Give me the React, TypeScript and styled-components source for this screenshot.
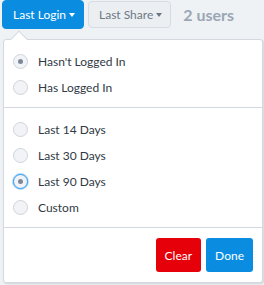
import * as React from "react";
import styled, { createGlobalStyle } from "styled-components";

const Global = createGlobalStyle`
    body{
        margin: 0;
        background: #eef2f5;
        font-family: Lato, "Noto Sans", sans-serif;
    }
`;

const Page = styled.div`
    position: relative;
    width: 264px;
    height: 285px;
    overflow: hidden;
`;

const Toolbar = styled.div`
    display: flex;
    align-items: center;
    gap: 4px;
    padding: 0 0 0 2px;
    height: 29px;
`;

const FilterButton = styled.button<{active?:boolean}>`
    height: ${props=>props.active ? "29px" : "27px"};
    padding: 0 8px 0 10px;
    border-radius: 4px;
    border: 1px solid ${props=>props.active ? "#0a8de0" : "#d6dce2"};
    background: ${props=>props.active ? "#0a8de0" : "#eceff2"};
    color: ${props=>props.active ? "#ffffff" : "#6c7886"};
    font-family: Lato, sans-serif;
    font-size: 12px;
    display: flex;
    align-items: center;
    gap: 3px;
`;

const Caret = styled.span`
    width: 0;
    height: 0;
    border-left: 3.5px solid transparent;
    border-right: 3.5px solid transparent;
    border-top: 4px solid currentColor;
`;

const Count = styled.span`
    margin-left: 8px;
    font-size: 16px;
    font-weight: 700;
    color: #9ba6b4;
`;

const Popup = styled.div`
    position: absolute;
    left: 3px;
    top: 39px;
    width: 258px;
    background: #fff;
    border: 1px solid #d3d9df;
    border-radius: 3px;
    box-shadow: 1px 1px 2px rgba(0,0,0,0.12);
    &::before{
        content: "";
        position: absolute;
        left: 9px;
        top: -7px;
        width: 11px;
        height: 11px;
        background: #fff;
        border-left: 1px solid #d3d9df;
        border-top: 1px solid #d3d9df;
        transform: rotate(45deg);
    }
`;

const Section = styled.div`
    display: flex;
    flex-direction: column;
    padding: 8px 0 7px 9px;
    border-bottom: 1px solid #d3d9df;
`;

const Row = styled.label`
    display: flex;
    align-items: center;
    gap: 10px;
    height: 26px;
    font-size: 12px;
    color: #323a45;
`;

const Radio = styled.span<{checked?:boolean;focus?:boolean}>`
    box-sizing: border-box;
    width: 15px;
    height: 15px;
    border-radius: 50%;
    background: #f1f3f6;
    border: 1px solid ${props=>props.focus ? "#2a9af0" : "#cfd5dc"};
    box-shadow: ${props=>props.focus ? "0 0 0 1px rgba(42,154,240,0.35)" : "none"};
    display: flex;
    align-items: center;
    justify-content: center;
    &::after{
        content: "";
        display: ${props=>props.checked ? "block" : "none"};
        width: 5px;
        height: 5px;
        border-radius: 50%;
        background: #7d8898;
    }
`;

const Footer = styled.div`
    display: flex;
    justify-content: flex-end;
    gap: 5px;
    padding: 10px 9px 10px 0;
`;

const ActionButton = styled.button<{color:string}>`
    height: 34px;
    padding: 0 9px;
    border: none;
    border-radius: 3px;
    background: ${props=>props.color};
    color: #fff;
    font-family: Lato, sans-serif;
    font-size: 12px;
`;

const loginOptions = [
    {label:"Hasn't Logged In", checked:true},
    {label:"Has Logged In"},
];

const rangeOptions = [
    {label:"Last 14 Days"},
    {label:"Last 30 Days"},
    {label:"Last 90 Days", checked:true, focus:true},
    {label:"Custom"},
];

const App = () =>{
    return(
        <Page>
            <Global/>
            <Toolbar>
                <FilterButton active>Last Login<Caret/></FilterButton>
                <FilterButton>Last Share<Caret/></FilterButton>
                <Count>2 users</Count>
            </Toolbar>
            <Popup>
                <Section>
                    {loginOptions.map(o=>(
                        <Row key={o.label}><Radio checked={o.checked}/>{o.label}</Row>
                    ))}
                </Section>
                <Section>
                    {rangeOptions.map(o=>(
                        <Row key={o.label}><Radio checked={o.checked} focus={o.focus}/>{o.label}</Row>
                    ))}
                </Section>
                <Footer>
                    <ActionButton color="#e6000a">Clear</ActionButton>
                    <ActionButton color="#0a8de0">Done</ActionButton>
                </Footer>
            </Popup>
        </Page>
    )
}

export default App;
